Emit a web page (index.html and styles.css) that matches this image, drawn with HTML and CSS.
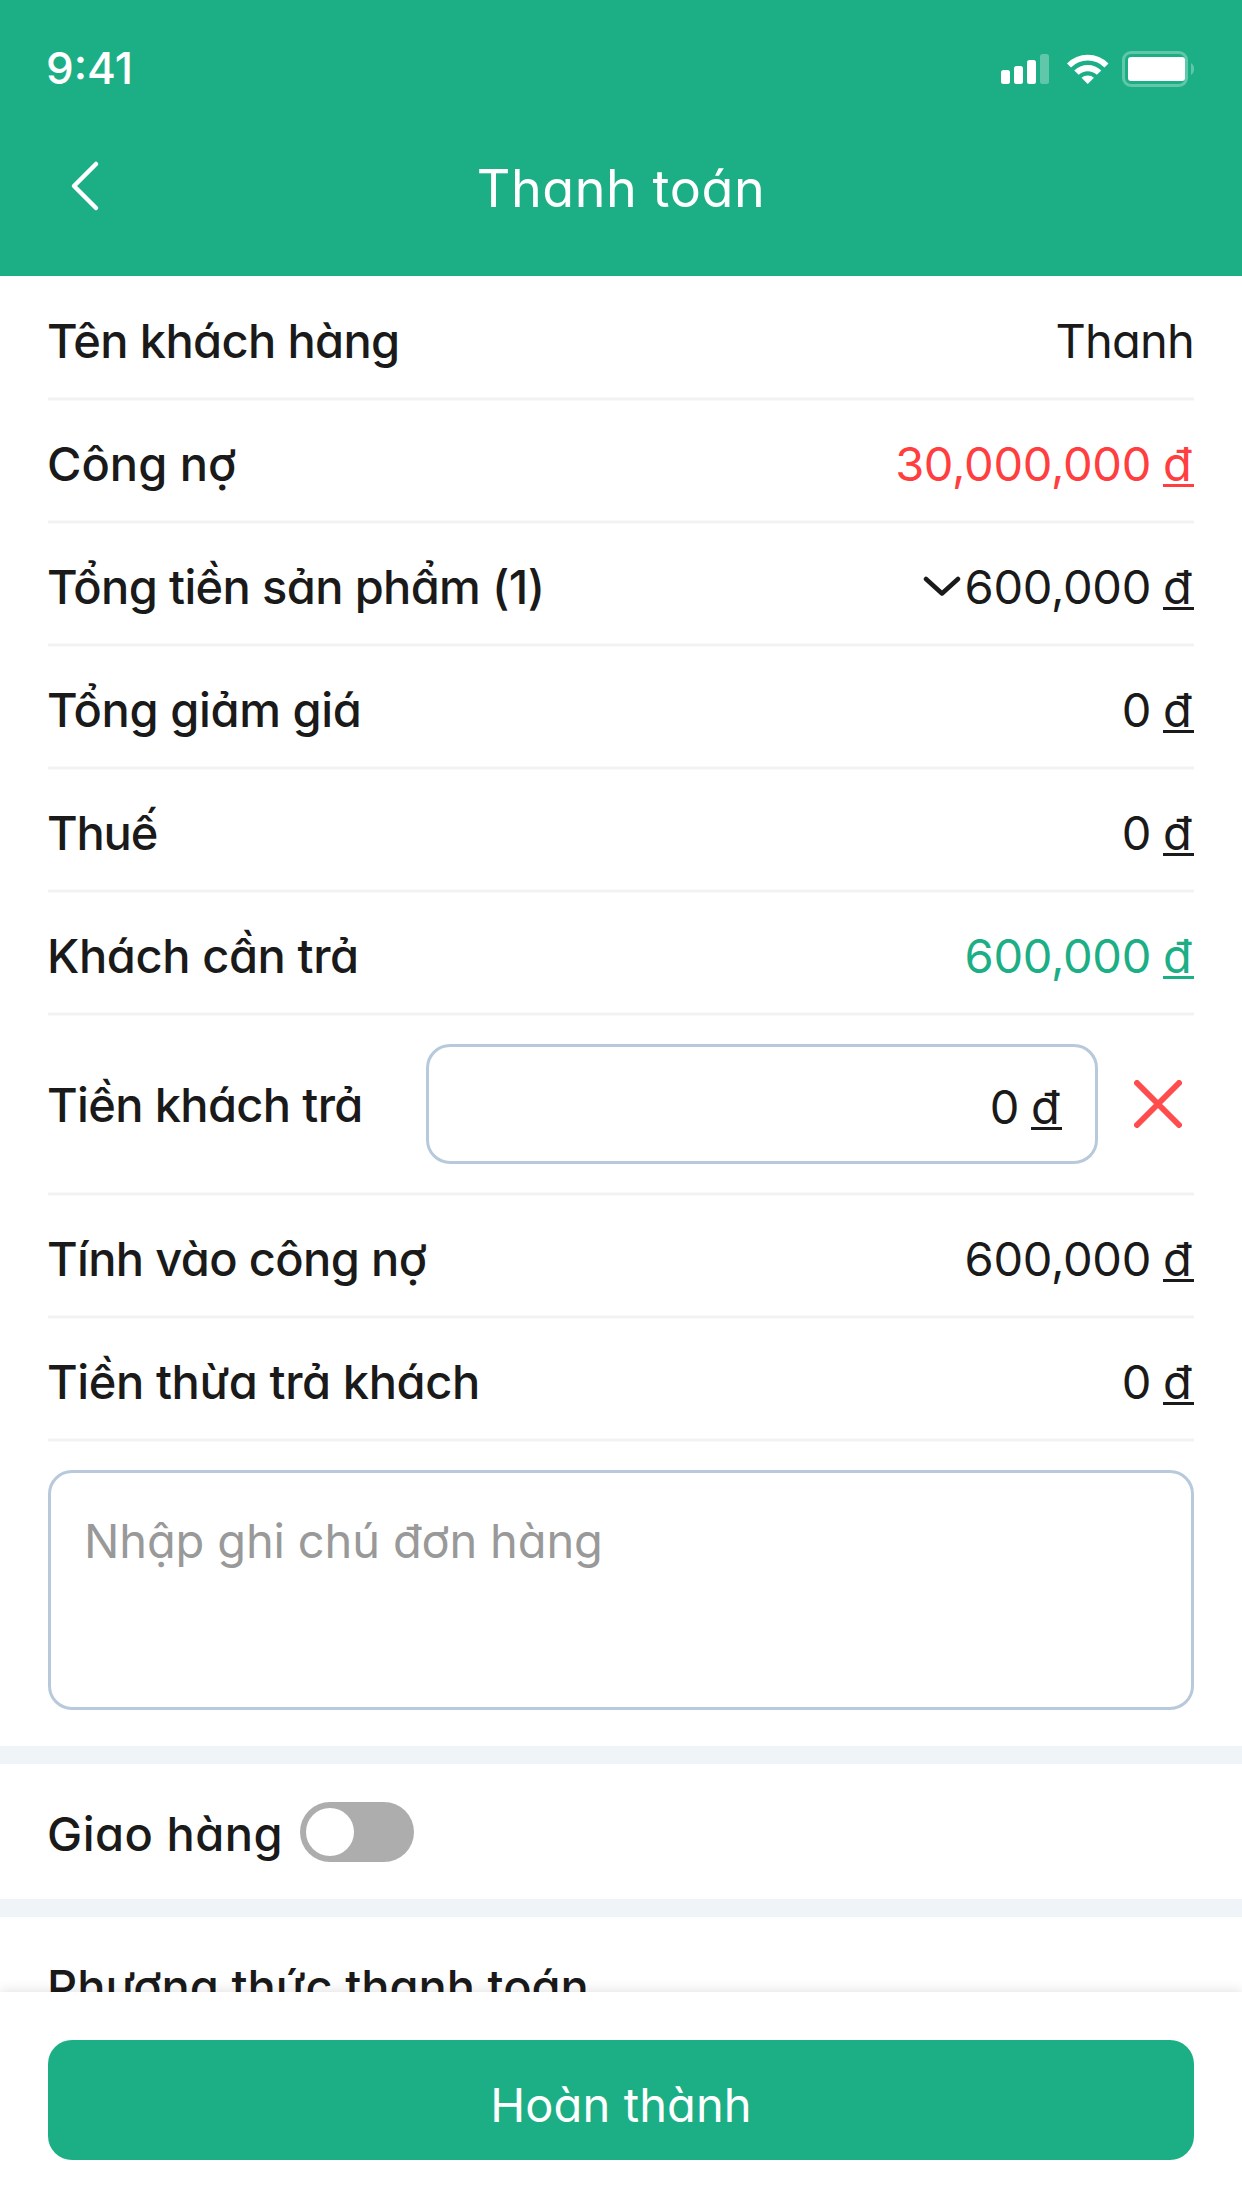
FILE: index.html
```html
<!DOCTYPE html>
<html lang="vi">
<head>
<meta charset="utf-8">
<title>Thanh toán</title>
<link rel="stylesheet" href="styles.css">
</head>
<body>
<div class="screen">
  <header class="header">
    <div class="status">
      <span class="time">9:41</span>
      <svg class="status-icons" width="196" height="40" viewBox="0 0 196 40" fill="#fff">
        <rect x="3" y="21" width="9" height="14" rx="2.5"/>
        <rect x="16" y="17" width="9" height="18" rx="2.5"/>
        <rect x="29" y="11" width="9" height="24" rx="2.5"/>
        <rect x="42" y="5" width="9" height="30" rx="2.5" opacity=".3"/>
        <path d="M69 14.5A29 29 0 0 1 110.500 14.500L106.500 18.500A23.500 23.500 0 0 0 73 18.500Z"/>
        <path d="M76.200 21.600A19 19 0 0 1 103.300 21.600L98.800 25.800A13 13 0 0 0 80.700 25.800Z"/>
        <path d="M83.500 28.800A9.500 9.500 0 0 1 96 28.800L89.750 35Z"/>
        <rect x="125.500" y="3.500" width="63" height="33" rx="7.500" fill="none" stroke="#fff" stroke-width="3" opacity=".3"/>
        <rect x="130" y="8" width="57" height="24" rx="3"/>
        <path d="M193 14v12a6.500 6.500 0 0 0 3-6 6.500 6.500 0 0 0-3-6Z" opacity=".3"/>
      </svg>
    </div>
    <div class="nav">
      <svg class="back" width="30" height="52" viewBox="0 0 30 52"><path d="M26 4 4 26l22 22"/></svg>
      <h1 class="title">Thanh toán</h1>
    </div>
  </header>

  <main class="content">
    <section class="summary">
      <div class="row"><span class="label snug">Tên khách hàng</span><span class="value tight">Thanh</span></div>
      <div class="row"><span class="label loose">Công nợ</span><span class="value red">30,000,000<u>đ</u></span></div>
      <div class="row"><span class="label snug">Tổng tiền sản phẩm (1)</span><span class="value"><svg class="chevron" width="38" height="24" viewBox="0 0 38 24"><path d="M3 4l16 14.500L35 4"/></svg>600,000<u>đ</u></span></div>
      <div class="row"><span class="label">Tổng giảm giá</span><span class="value">0<u>đ</u></span></div>
      <div class="row"><span class="label tight">Thuế</span><span class="value">0<u>đ</u></span></div>
      <div class="row"><span class="label">Khách cần trả</span><span class="value green">600,000<u>đ</u></span></div>
      <div class="row pay">
        <span class="label snug">Tiền khách trả</span>
        <div class="amount"><span class="value">0<u>đ</u></span></div>
        <svg class="clear" width="48" height="48" viewBox="0 0 48 48"><path d="M3 3l42 42M45 3 3 45"/></svg>
      </div>
      <div class="row"><span class="label snug">Tính vào công nợ</span><span class="value">600,000<u>đ</u></span></div>
      <div class="row"><span class="label">Tiền thừa trả khách</span><span class="value">0<u>đ</u></span></div>
      <div class="note">Nhập ghi chú đơn hàng</div>
    </section>
    <section class="delivery">
      <span class="label wide">Giao hàng</span>
      <div class="toggle"><div class="knob"></div></div>
    </section>
    <section class="method"><span class="label loose">Phương thức thanh toán</span></section>
  </main>

  <footer class="footer"><div class="submit">Hoàn thành</div></footer>
</div>
</body>
</html>
```
FILE: styles.css
```css
* { box-sizing: border-box; }

body {
  margin: 0;
  background: #fff;
  color: #1a1a1a;
  font-family: Inter, "Noto Sans", sans-serif;
  font-size: 47px;
  line-height: 60px;
  font-feature-settings: "cv11";
}

.screen {
  display: flex;
  flex-direction: column;
  width: 1242px;
  height: 2208px;
  overflow: hidden;
}

.header {
  flex: none;
  height: 276px;
  background: #1caf86;
  color: #fff;
}

.status {
  display: flex;
  justify-content: space-between;
  align-items: flex-start;
  height: 132px;
  padding: 38px 46px 0;
}

.time {
  font-size: 44px;
  font-weight: 500;
}

.status-icons { margin-top: 11px; margin-right: 2px; }

.nav {
  display: grid;
  grid-template-columns: 30px 1fr 30px;
  align-items: center;
  height: 108px;
  padding: 0 70px;
}

.back, .chevron, .clear {
  fill: none;
  stroke: currentColor;
  stroke-linecap: round;
  stroke-linejoin: round;
}

.back { stroke-width: 4.5; }

.title {
  margin: 6px 0 0;
  text-align: center;
  font-size: 52px;
  font-weight: 400;
  letter-spacing: 0.6px;
}

.content {
  flex: 1;
  min-height: 0;
  overflow: hidden;
}

.summary {
  height: 1488px;
  padding: 2px 48px 0;
  border-bottom: 18px solid #eff4f9;
}

.row {
  display: flex;
  align-items: center;
  justify-content: space-between;
  height: 123px;
  padding-top: 3px;
  background: linear-gradient(#f9f9f9 25%, #f2f2f2 25% 75%, #f9f9f9 75%) bottom / 100% 4px no-repeat;
}

.label {
  margin-left: -1px;
  font-weight: 500;
  letter-spacing: -0.4px;
  white-space: nowrap;
}

.value {
  display: flex;
  align-items: center;
  letter-spacing: -0.3px;
}

.label.snug { letter-spacing: -0.65px; }
.label.tight { letter-spacing: -1.2px; }
.value.tight { letter-spacing: -0.8px; }
.label.loose { letter-spacing: 0; }
.label.wide { letter-spacing: 0.5px; }

.red { color: #ff3f3f; }
.green { color: #1caf86; }

.value u {
  margin-left: 12px;
  letter-spacing: 2.2px;
  text-decoration-thickness: 3px;
  text-underline-offset: 3px;
  text-decoration-skip-ink: none;
}

.chevron {
  stroke-width: 4.5;
  margin: 0 4px 0 0;
}

.pay {
  justify-content: flex-start;
  height: 180px;
  padding: 0 12px 4px 0;
}

.pay .label {
  width: 379px;
  padding-top: 2px;
}

.amount {
  display: flex;
  justify-content: flex-end;
  width: 672px;
  height: 120px;
  padding: 6px 33px 0 0;
  border: 3px solid #b7c9db;
  border-radius: 24px;
}

.clear {
  margin-left: auto;
  color: #ff4d4d;
  stroke-width: 6;
}

.note {
  height: 240px;
  margin-top: 28px;
  padding: 38px 33px;
  border: 3px solid #b7c9db;
  border-radius: 24px;
  color: #999;
  letter-spacing: -0.15px;
}

.delivery {
  display: flex;
  align-items: center;
  height: 153px;
  padding: 1px 48px 0;
  border-bottom: 18px solid #eff4f9;
}

.delivery .label {
  width: 253px;
  padding-top: 3px;
}

.toggle {
  width: 114px;
  height: 60px;
  padding: 6px;
  border-radius: 30px;
  background: #adadad;
}

.knob {
  width: 48px;
  height: 48px;
  border-radius: 50%;
  background: #fff;
}

.method { padding: 40px 48px 0; }

.footer {
  position: relative;
  flex: none;
  height: 216px;
  padding: 48px 48px 0;
  background: #fff;
  box-shadow: 0 0 12px rgba(0, 0, 0, 0.14);
}

.submit {
  height: 120px;
  padding-top: 35px;
  border-radius: 24px;
  background: #1caf86;
  color: #fff;
  text-align: center;
  letter-spacing: 0.1px;
}
```
